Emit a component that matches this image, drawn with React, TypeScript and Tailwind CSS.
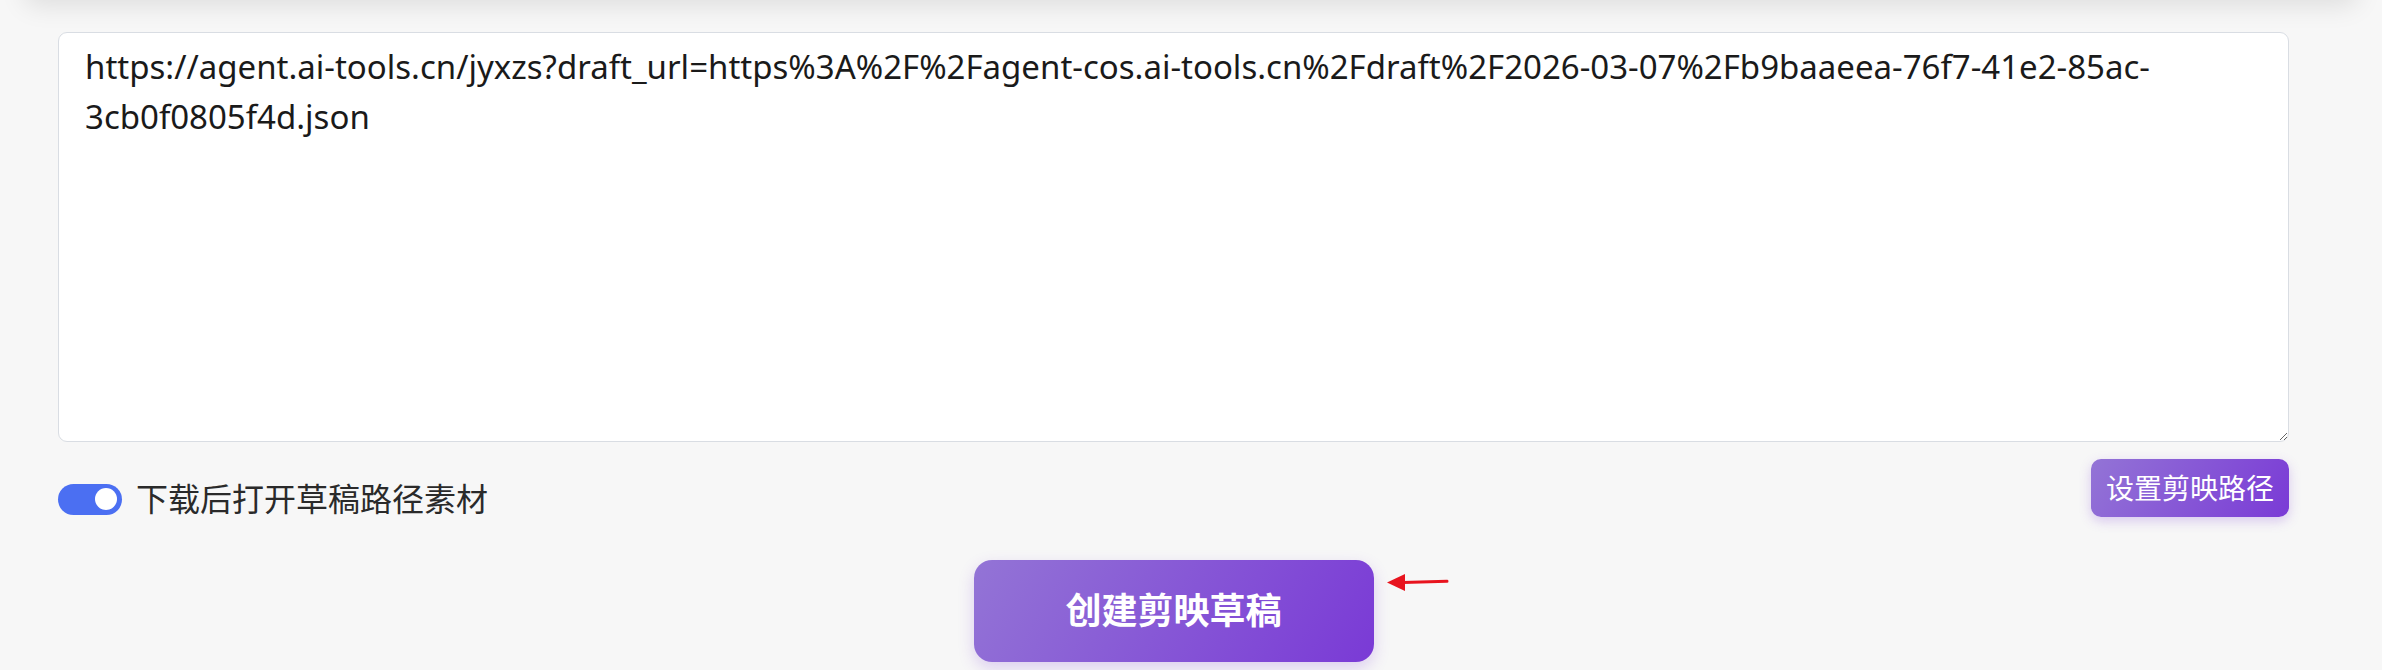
import React, { useState } from 'react';

const DRAFT_URL =
  'https://agent.ai-tools.cn/jyxzs?draft_url=https%3A%2F%2Fagent-cos.ai-tools.cn%2Fdraft%2F2026-03-07%2Fb9baaeea-76f7-41e2-85ac-3cb0f0805f4d.json';

const App: React.FC = () => {
  const [url, setUrl] = useState(DRAFT_URL);
  const [openAfter, setOpenAfter] = useState(true);

  return (
    <div
      className="h-[670px] w-full overflow-hidden bg-[#f7f7f7]"
      style={{ fontFamily: '"Noto Sans", "Noto Sans CJK SC", sans-serif' }}
    >
      {/* bottom edge of the card above */}
      <div className="mx-[24px] -mt-[60px] h-[60px] rounded-[12px] bg-[#f7f7f7] shadow-[0_6px_26px_rgba(0,0,0,0.1)]" />

      <div className="ml-[58px] mt-[32px] w-[2231px]">
        <textarea
          value={url}
          onChange={(e) => setUrl(e.target.value)}
          className="block h-[410px] w-full rounded-[9px] border-[1.5px] border-[#d9dde3] bg-white px-[26px] pb-[10px] pt-[9px] text-[33px] leading-[50px] text-[#1a1a1a] outline-none"
          style={{ fontFamily: '"Noto Sans", "Noto Sans CJK SC", sans-serif' }}
        />

        <div className="mt-[17px] flex items-start justify-between">
          <label className="mt-[24px] flex cursor-pointer items-center gap-[14px]">
            <button
              type="button"
              onClick={() => setOpenAfter(!openAfter)}
              className={`flex h-[31px] w-[64px] items-center rounded-full px-[5px] ${
                openAfter ? 'justify-end bg-[#4b6ff2]' : 'justify-start bg-[#c9ccd3]'
              }`}
            >
              <span className="h-[22px] w-[22px] rounded-full bg-white" />
            </button>
            <span className="text-[32px] leading-none text-[#2a2a2a]">下载后打开草稿路径素材</span>
          </label>

          <button
            type="button"
            className="flex h-[58px] items-center rounded-[10px] bg-[linear-gradient(120deg,#9374d6,#7a3ad6)] px-[15px] text-[28px] text-white shadow-[0_4px_12px_rgba(123,58,214,0.25)]"
          >
            设置剪映路径
          </button>
        </div>

        <div className="mt-[43px] flex justify-center">
          <div className="relative">
            <button
              type="button"
              className="flex h-[102px] w-[400px] items-center justify-center rounded-[18px] bg-[linear-gradient(120deg,#9374d6,#7a3ad6)] text-[36px] font-bold text-white shadow-[0_6px_16px_rgba(123,58,214,0.22)]"
            >
              创建剪映草稿
            </button>
            <svg
              className="absolute left-full top-[12px] ml-[13px]"
              width="62"
              height="20"
              viewBox="0 0 62 20"
            >
              <path d="M16 10.5 L60 9.2" stroke="#e8141e" strokeWidth="3" strokeLinecap="round" />
              <path d="M0 10.5 L18 2 L18 19 Z" fill="#e8141e" />
            </svg>
          </div>
        </div>
      </div>
    </div>
  );
};

export default App;
